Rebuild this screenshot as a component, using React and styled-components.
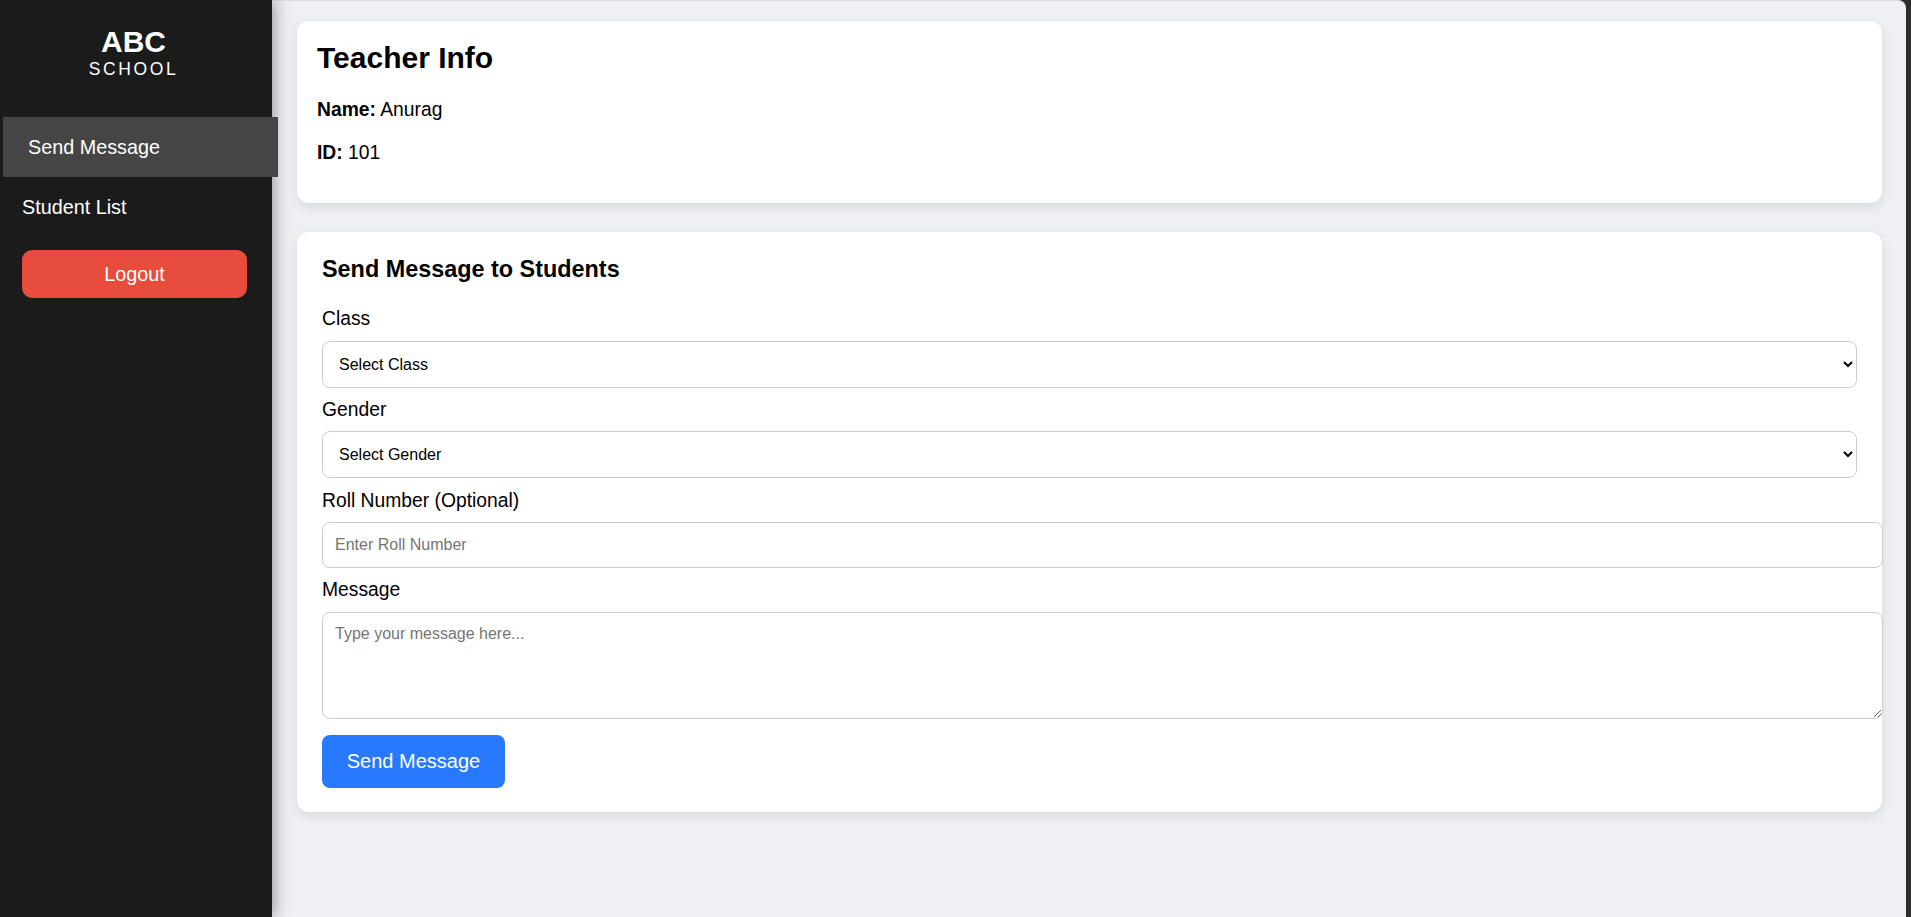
import React from "react";
import styled, { createGlobalStyle } from "styled-components";

const GlobalStyle = createGlobalStyle`
  html, body {
    margin: 0;
    padding: 0;
    background: #2c2c2c;
    font-family: "Liberation Sans", Arial, sans-serif;
  }
`;

const Layout = styled.div`
  display: flex;
  height: 917px;
  overflow: hidden;
`;

const Sidebar = styled.aside`
  position: relative;
  z-index: 2;
  flex: 0 0 272px;
  background-color: #1b1b1b;
  box-shadow: 3px 0 14px rgba(0, 0, 0, 0.35);
  padding-top: 25px;
  display: flex;
  flex-direction: column;
`;

const Logo = styled.div`
  color: #fff;
  text-align: center;
  padding-right: 5px;
  margin-bottom: 38px;
`;

const LogoTitle = styled.div`
  font-size: 30px;
  font-weight: bold;
  line-height: 34px;
`;

const LogoSub = styled.div`
  font-size: 17.5px;
  letter-spacing: 2.6px;
  line-height: 20px;
`;

const NavItem = styled.div`
  display: flex;
  align-items: center;
  height: 60px;
  width: 275px;
  margin-left: -3px;
  padding-left: 25px;
  box-sizing: border-box;
  color: #fff;
  font-size: 19.8px;
  cursor: pointer;
  background: ${(p) => (p.$active ? "#454545" : "transparent")};
  transform: ${(p) => (p.$active ? "translateX(6px)" : "none")};
`;

const LogoutButton = styled.button`
  margin: 13px 0 0 22px;
  width: 225px;
  height: 48px;
  border: 0;
  border-radius: 10px;
  background: #e74c3c;
  color: #fff;
  font-family: inherit;
  font-size: 19.8px;
  cursor: pointer;
`;

const Main = styled.main`
  flex: 1;
  margin-right: 5px;
  background: #eff0f4;
  border-top: 1px solid #dcdde1;
  border-top-right-radius: 8px;
  padding: 20px 24px 0 25px;
`;

const Card = styled.section`
  background: #fff;
  border-radius: 12px;
  box-shadow: 0 4px 12px rgba(0, 0, 0, 0.1);
  padding: ${(p) => p.$pad};
  margin-bottom: 29px;
`;

const CardTitle = styled.h2`
  margin: 0 0 24px;
  font-size: 30px;
  line-height: 33px;
  font-weight: bold;
  color: #000;
`;

const InfoLine = styled.p`
  margin: 0 0 19px;
  font-size: 19.3px;
  line-height: 24px;
  color: #000;

  &:last-child {
    margin-bottom: 18px;
  }
`;

const FormTitle = styled.h3`
  margin: 0 0 26px;
  font-size: 23.4px;
  line-height: 26px;
  font-weight: bold;
  color: #000;
`;

const Label = styled.label`
  display: block;
  font-size: 19.3px;
  line-height: 21.5px;
  margin-bottom: 11px;
  color: #000;
`;

const Select = styled.select`
  display: block;
  width: 100%;
  height: 47px;
  margin-bottom: 11.3px;
  padding: 0 12px;
  border: 1px solid #ccc;
  border-radius: 8px;
  background: #fff;
  font-family: inherit;
  font-size: 16px;
  color: #000;
`;

const TextInput = styled.input`
  display: block;
  width: 100%;
  height: 44px;
  margin-bottom: 11.3px;
  padding: 0 12px;
  border: 1px solid #ccc;
  border-radius: 8px;
  font-family: inherit;
  font-size: 16px;

  &::placeholder {
    color: #757575;
  }
`;

const TextArea = styled.textarea`
  display: block;
  width: 100%;
  height: 81px;
  margin-bottom: 16px;
  padding: 12px;
  border: 1px solid #ccc;
  border-radius: 8px;
  font-family: inherit;
  font-size: 16px;
  resize: vertical;

  &::placeholder {
    color: #757575;
  }
`;

const SendButton = styled.button`
  display: block;
  width: 183px;
  height: 53px;
  border: 0;
  border-radius: 8px;
  background: #2979ff;
  color: #fff;
  font-family: inherit;
  font-size: 20px;
  cursor: pointer;
`;

const App = () => {
  return (
    <Layout>
      <GlobalStyle />
      <Sidebar>
        <Logo>
          <LogoTitle>ABC</LogoTitle>
          <LogoSub>SCHOOL</LogoSub>
        </Logo>
        <NavItem $active>Send Message</NavItem>
        <NavItem>Student List</NavItem>
        <LogoutButton>Logout</LogoutButton>
      </Sidebar>

      <Main>
        <Card $pad="20px 20px">
          <CardTitle>Teacher Info</CardTitle>
          <InfoLine>
            <b>Name:</b> Anurag
          </InfoLine>
          <InfoLine>
            <b>ID:</b> 101
          </InfoLine>
        </Card>

        <Card $pad="24px 25px">
          <FormTitle>Send Message to Students</FormTitle>

          <Label>Class</Label>
          <Select defaultValue="">
            <option value="">Select Class</option>
          </Select>

          <Label>Gender</Label>
          <Select defaultValue="">
            <option value="">Select Gender</option>
          </Select>

          <Label>Roll Number (Optional)</Label>
          <TextInput placeholder="Enter Roll Number" />

          <Label>Message</Label>
          <TextArea placeholder="Type your message here..." />

          <SendButton>Send Message</SendButton>
        </Card>
      </Main>
    </Layout>
  );
};

export default App;
